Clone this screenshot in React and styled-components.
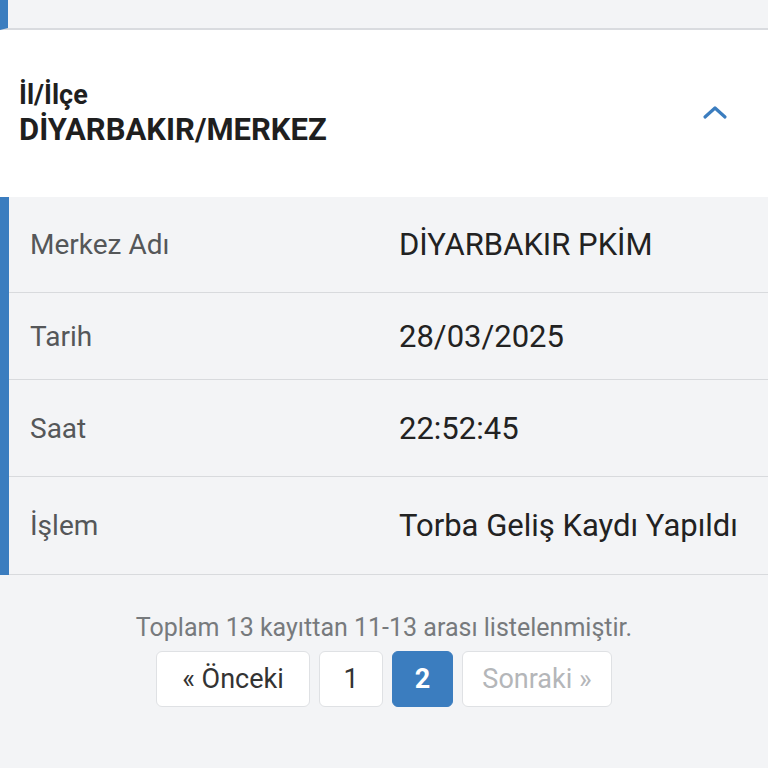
import styled, { createGlobalStyle } from "styled-components";

const GlobalStyle = createGlobalStyle`
  html, body {
    margin: 0;
    padding: 0;
    background-color: #f3f4f6;
    font-family: Roboto, "Liberation Sans", sans-serif;
  }
`;

const StyledPage = styled.div`
  width: 768px;
  height: 768px;
  overflow: hidden;
  display: flex;
  flex-direction: column;
  background-color: #f3f4f6;
`;

const StyledPrevCard = styled.div`
  height: 30px;
  box-sizing: border-box;
  border-left: 8px solid #3b7dbf;
  border-bottom: 2px solid #d9dbdf;
  background-color: #f3f4f6;
`;

const StyledHeader = styled.div`
  height: 167px;
  display: flex;
  align-items: center;
  justify-content: space-between;
  padding: 0 40px 0 19px;
  background-color: #ffffff;

  .header__label {
    margin: 0;
    font-size: 27px;
    font-weight: 700;
    color: #1f1f1f;
    line-height: 30px;
  }

  .header__value {
    margin: 2px 0 0;
    font-size: 31px;
    font-weight: 700;
    color: #1f1f1f;
    line-height: 36px;
  }

  .header__toggle {
    margin-top: -4px;
  }
`;

const StyledTable = styled.div`
  border-left: 9px solid #3b7dbf;
  background-color: #f3f4f6;
`;

const StyledRow = styled.div`
  height: ${({ $height }) => $height}px;
  display: grid;
  grid-template-columns: 390px 1fr;
  align-items: center;
  box-sizing: border-box;
  border-bottom: 1px solid #d8dadd;

  .row__label {
    padding-left: 21px;
    font-size: 28px;
    color: #555759;
  }

  .row__value {
    font-size: 31px;
    color: #222222;
    white-space: nowrap;
  }
`;

const StyledFooter = styled.div`
  display: flex;
  flex-direction: column;
  align-items: center;
  padding-top: 38px;

  .footer__summary {
    margin: 0 0 8px;
    font-size: 25px;
    color: #777a7d;
    line-height: 30px;
  }
`;

const StyledPager = styled.div`
  display: flex;
  gap: 9px;
`;

const StyledPageButton = styled.div`
  height: 56px;
  min-width: ${({ $width }) => $width}px;
  box-sizing: border-box;
  display: flex;
  align-items: center;
  justify-content: center;
  border-radius: 6px;
  font-size: 27px;
  border: 1px solid ${({ $active }) => ($active ? "#3b7dbf" : "#dfe1e4")};
  background-color: ${({ $active }) => ($active ? "#3b7dbf" : "#ffffff")};
  color: ${({ $active, $disabled }) =>
    $active ? "#ffffff" : $disabled ? "#b4b6b9" : "#333333"};
  font-weight: ${({ $active }) => ($active ? 700 : 400)};
`;

const ChevronUp = () => (
  <svg className="header__toggle" width="26" height="16" viewBox="0 0 26 16">
    <path
      d="M3 13 L13 4 L23 13"
      fill="none"
      stroke="#3b7dbf"
      strokeWidth="3.2"
      strokeLinecap="round"
      strokeLinejoin="round"
    />
  </svg>
);

const rows = [
  { label: "Merkez Adı", value: "DİYARBAKIR PKİM", height: 96 },
  { label: "Tarih", value: "28/03/2025", height: 87 },
  { label: "Saat", value: "22:52:45", height: 97 },
  { label: "İşlem", value: "Torba Geliş Kaydı Yapıldı", height: 98 }
];

const App = () => {
  return (
    <StyledPage>
      <GlobalStyle />
      <StyledPrevCard />
      <StyledHeader>
        <div>
          <p className="header__label">İl/İlçe</p>
          <p className="header__value">DİYARBAKIR/MERKEZ</p>
        </div>
        <ChevronUp />
      </StyledHeader>
      <StyledTable>
        {rows.map((row) => (
          <StyledRow key={row.label} $height={row.height}>
            <span className="row__label">{row.label}</span>
            <span className="row__value">{row.value}</span>
          </StyledRow>
        ))}
      </StyledTable>
      <StyledFooter>
        <p className="footer__summary">
          Toplam 13 kayıttan 11-13 arası listelenmiştir.
        </p>
        <StyledPager>
          <StyledPageButton $width={154}>« Önceki</StyledPageButton>
          <StyledPageButton $width={64}>1</StyledPageButton>
          <StyledPageButton $width={61} $active>
            2
          </StyledPageButton>
          <StyledPageButton $width={150} $disabled>
            Sonraki »
          </StyledPageButton>
        </StyledPager>
      </StyledFooter>
    </StyledPage>
  );
};

export default App;
